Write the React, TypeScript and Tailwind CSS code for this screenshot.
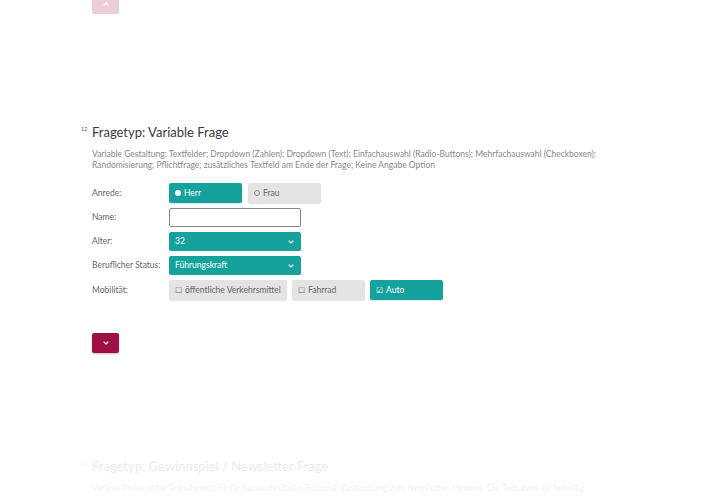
import { ChevronDown, ChevronUp } from "lucide-react";

const teal = "bg-[#15a29c] text-white";
const grey = "bg-[#e4e4e4] text-[#666]";

function Chip({ active, children, w = "w-[73px]" }: { active?: boolean; children: React.ReactNode; w?: string }) {
  return (
    <div
      className={`${w} h-[20px] rounded-[2px] flex items-center gap-[3px] px-[6px] text-[8.5px] shadow-[0_1px_1px_rgba(0,0,0,0.12)] ${
        active ? teal : grey
      }`}
    >
      {children}
    </div>
  );
}

function Select({ value }: { value: string }) {
  return (
    <div className={`w-[132px] h-[19px] rounded-[2px] flex items-center justify-between pl-[6px] pr-[6px] text-[8.5px] ${teal}`}>
      <span>{value}</span>
      <ChevronDown size={8} strokeWidth={3.5} />
    </div>
  );
}

function Heading({ nr, title }: { nr: string; title: string }) {
  return (
    <div className="flex items-start ml-[-11px]">
      <span className="w-[11px] text-[5.5px] leading-none pt-[2px] text-[#666]">{nr}</span>
      <h2 className="text-[13px] leading-[14px] text-[#3a3a3a]">{title}</h2>
    </div>
  );
}

export default function App() {
  return (
    <div className="w-[720px] h-[500px] overflow-hidden bg-white font-['Lato','Open_Sans',sans-serif]">
      <div className="pl-[92px]">
        {/* vorherige Frage, ausgeblendet */}
        <div className="mt-[-6px] w-[27px] h-[20px] rounded-[2px] bg-[#9e0f44] opacity-20 flex items-center justify-center text-white">
          <ChevronUp size={8} strokeWidth={3.5} />
        </div>

        {/* Frage 12 */}
        <section className="mt-[111px]">
          <Heading nr="12" title="Fragetyp: Variable Frage" />
          <p className="mt-[10px] w-[560px] text-[8.5px] leading-[11px] text-[#888]">
            Variable Gestaltung: Textfelder; Dropdown (Zahlen); Dropdown (Text); Einfachauswahl (Radio-Buttons); Mehrfachauswahl (Checkboxen);
            <br />
            Randomisierung; Pflichtfrage; zusätzliches Textfeld am Ende der Frage; Keine Angabe Option
          </p>

          <div className="mt-[12px] grid grid-cols-[77px_auto] items-center gap-y-[5px] text-[8.5px] text-[#666]">
            <span>Anrede:</span>
            <div className="flex gap-[6px]">
              <Chip active>
                <span className="w-[6px] h-[6px] rounded-full bg-white" />
                Herr
              </Chip>
              <Chip>
                <span className="w-[6px] h-[6px] rounded-full border border-[#888]" />
                Frau
              </Chip>
            </div>

            <span>Name:</span>
            <div className="w-[132px] h-[19px] rounded-[2px] border border-[#888] bg-white" />

            <span>Alter:</span>
            <Select value="32" />

            <span>Beruflicher Status:</span>
            <Select value="Führungskraft" />

            <span>Mobilität:</span>
            <div className="flex gap-[5px]">
              <Chip w="w-[118px]">
                <span className="text-[8px]">☐</span>öffentliche Verkehrsmittel
              </Chip>
              <Chip>
                <span className="text-[8px]">☐</span>Fahrrad
              </Chip>
              <Chip active>
                <span className="text-[8px]">☑</span>Auto
              </Chip>
            </div>
          </div>

          <div className="mt-[33px] w-[27px] h-[20px] rounded-[2px] bg-[#9e0f44] flex items-center justify-center text-white shadow-[0_1px_2px_rgba(0,0,0,0.25)]">
            <ChevronDown size={8} strokeWidth={3.5} />
          </div>
        </section>

        {/* nächste Frage, ausgeblendet */}
        <section className="mt-[106px] opacity-10">
          <Heading nr="11" title="Fragetyp: Gewinnspiel / Newsletter Frage" />
          <p className="mt-[10px] w-[580px] text-[8.5px] leading-[11px] text-[#7a7a7a]">
            Verlose Preise unter Teilnehmern: Einfachauswahl (Radio-Buttons); Zustimmung zum Newsletter; Hinweis: Die Teilnahme ist freiwillig
          </p>
        </section>
      </div>
    </div>
  );
}
